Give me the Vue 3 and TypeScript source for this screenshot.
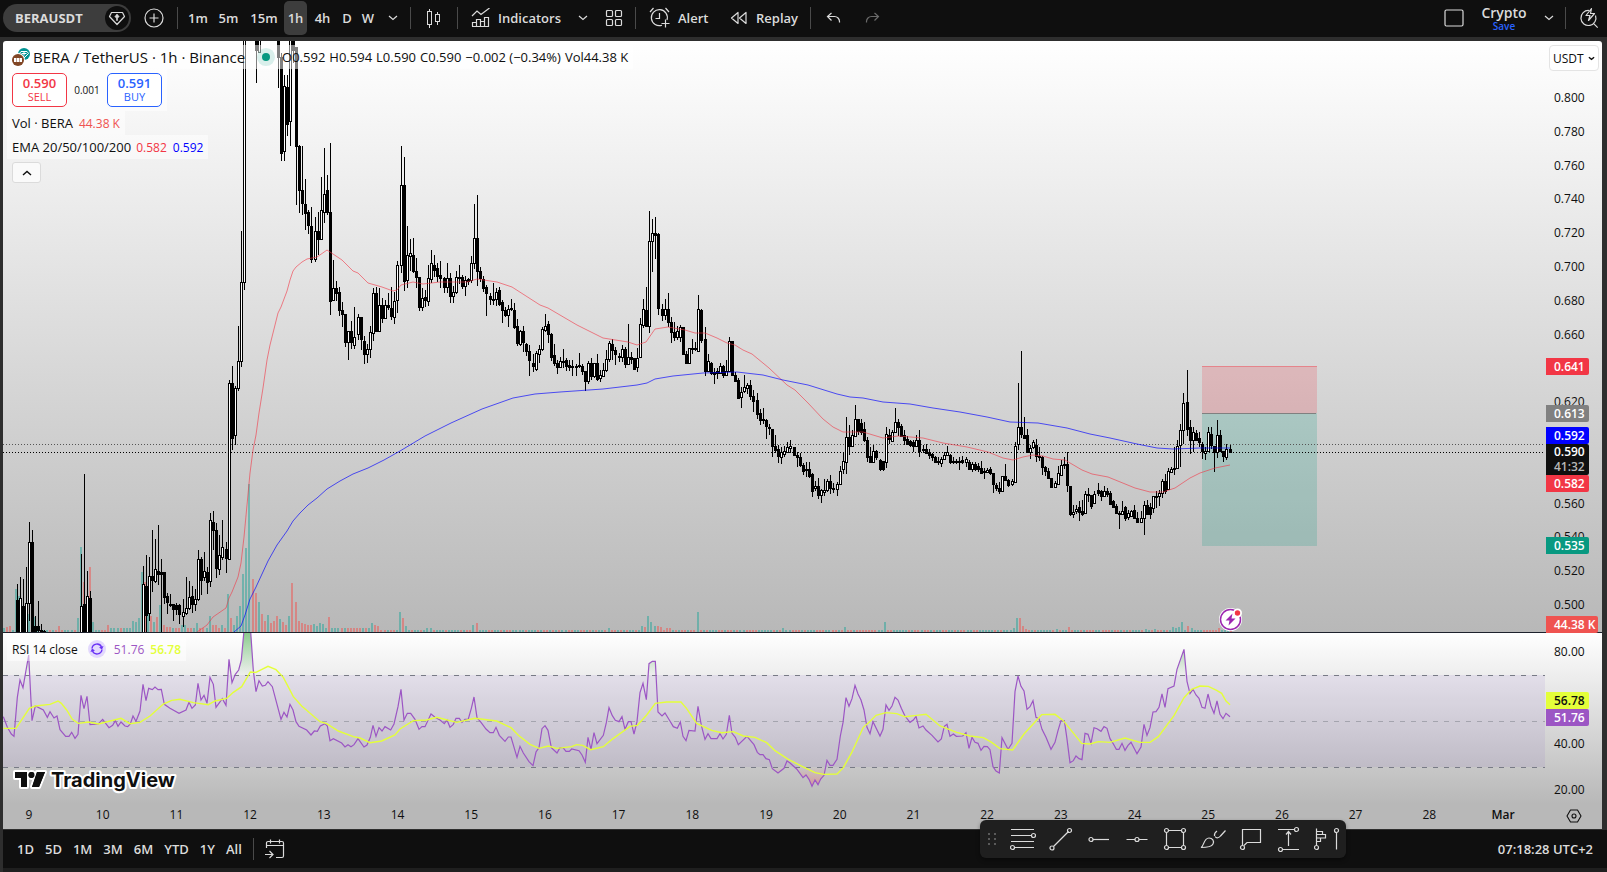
<script setup lang="ts">
import { ref } from 'vue'

/* ---------- toolbar data ---------- */
const intervals = [
  { label: '1m', width: 30 },
  { label: '5m', width: 31 },
  { label: '15m', width: 40 },
  { label: '1h', width: 23 },
  { label: '4h', width: 31 },
  { label: 'D', width: 18 },
  { label: 'W', width: 24 }
]
const activeInterval = ref('1h')
const ranges = ['1D', '5D', '1M', '3M', '6M', 'YTD', '1Y', 'All']
const currency = ref('USDT')

/* ---------- plot geometry ---------- */
const PLOT = { left: 3, width: 1542 }
const PRICE = { top: 41, height: 591 }
const RSI = { top: 633, height: 171 }
const BAR_STEP = 3.0686

const priceTop = (y: number) => ({ top: ((y - PRICE.top) / PRICE.height) * 100 + '%' })
const rsiTop = (y: number) => ({ top: ((y - RSI.top) / RSI.height) * 100 + '%' })

const priceTicks = [0.8, 0.78, 0.76, 0.74, 0.72, 0.7, 0.68, 0.66, 0.62, 0.56, 0.54, 0.52, 0.5].map(p => ({
  text: p.toFixed(3),
  y: 98 + (0.8 - p) * 1690
}))
const priceTags = [
  { text: '0.641', y: 367, kind: 'red' },
  { text: '0.613', y: 414, kind: 'grey' },
  { text: '0.592', y: 436, kind: 'blue' },
  { text: '0.582', y: 484, kind: 'red' },
  { text: '0.535', y: 546, kind: 'teal' },
  { text: '44.38 K', y: 625, kind: 'volume' }
]
const rsiTicks = [
  { text: '80.00', y: 652 },
  { text: '40.00', y: 744 },
  { text: '20.00', y: 790 }
]
const rsiTags = [
  { text: '56.78', y: 701, kind: 'yellow' },
  { text: '51.76', y: 718, kind: 'purple' }
]
const days = Array.from({ length: 21 }, (_, i) => ({
  text: i < 20 ? String(9 + i) : 'Mar',
  x: 29 + i * 73.7
}))
const dayLeft = (x: number) => ({ left: ((x - PLOT.left) / PLOT.width) * 100 + '%' })

/* ---------- candles: x of the first bar, then high, top, bottom, low, u/d ---------- */
const candleRows: [number, string][] = [
  [17, '584 600 635 635 d,577 598 635 635 u,579 606 635 635 d,567 603 635 635 u,522 542 603 620 u,530 542 635 635 d,616 626 635 635 d,601 626 630 635 d,624 630 635 635 d,630 631 635 635 d'],
  [81, '554 606 635 635 u,474 604 635 635 d,571 596 635 635 u,591 598 635 635 d'],
  [143, '566 584 635 635 u,555 586 615 635 d,557 576 613 620 u,530 576 580 591 d,539 569 581 582 u,525 571 574 584 d,559 572 574 635 d,572 572 597 603 d,593 596 602 613 d,594 604 605 606 d,604 604 609 620 d,603 605 609 614 d,604 605 614 623 d'],
  [183, '599 612 616 626 u,577 608 613 614 u,581 597 608 609 u,586 596 604 612 d,589 599 604 610 u,550 559 599 600 u,557 559 580 594 d,552 571 577 580 u,567 572 582 593 d,513 520 581 586 u,511 522 530 549 d,523 530 568 577 d,535 555 569 574 u,520 547 557 559 u'],
  [226, '542 549 558 572 d,380 383 559 559 u,366 383 438 449 d,386 388 435 444 u,326 361 388 390 u,231 282 361 366 u,20 20 282 289 u'],
  [256, '20 20 50 82 d,20 20 52 52 u'],
  [278, '20 20 57 87 d,53 57 153 160 d,75 86 151 160 u,75 87 124 135 d,20 20 121 145 u,20 20 50 62 d,47 47 146 204 d,145 146 190 212 d,146 190 203 214 d,179 204 213 229 d,210 212 225 233 d,207 226 259 262 d'],
  [315, '217 231 259 261 u,212 231 239 254 d,177 210 239 239 u,148 194 212 222 u,175 190 212 214 d,143 212 301 314 d,260 288 300 300 u,281 288 293 300 d,287 292 310 315 d,302 310 314 326 d,314 314 342 346 d,331 331 342 359 u,321 331 342 348 d,307 337 345 348 u'],
  [358, '314 317 334 339 u,317 317 339 349 d,336 341 354 363 d,344 349 354 362 u,326 332 349 357 u,288 293 333 340 u,287 293 331 331 d,288 305 331 331 u,298 305 318 322 d,300 305 318 318 u,293 305 307 309 d,287 308 316 319 d,292 301 317 323 u,261 265 300 312 u'],
  [401, '146 185 265 272 u,157 185 281 290 d,226 255 280 287 u,239 253 256 270 u,238 255 271 272 d,258 271 277 287 d,277 277 307 310 d,288 298 307 310 u,290 297 300 306 d,265 278 301 305 u,250 263 279 282 u,255 265 270 276 d,263 268 276 281 d,261 275 278 287 d'],
  [444, '277 278 287 292 d,263 278 287 292 u,273 278 296 302 d,286 292 296 302 u,271 277 292 293 u,265 277 278 283 d,275 277 286 288 d,276 280 286 295 u,278 279 281 284 d,256 263 280 282 u,204 238 263 268 u,195 238 271 285 d,267 271 278 281 d,276 279 288 291 d,285 287 293 315 d'],
  [490, '293 296 299 304 d,283 299 300 304 d,288 292 299 305 u,287 290 304 305 d,300 302 310 322 d,307 310 315 316 d,305 309 315 326 u,299 308 309 310 d,303 310 327 328 d,319 326 343 345 d,330 331 344 345 u,326 331 342 351 d,343 344 351 355 d,345 351 360 375 d'],
  [533, '354 363 366 371 d,351 353 369 370 u,345 349 354 362 u,327 329 349 350 u,314 326 330 331 u,321 324 334 342 d,333 334 357 360 d,344 355 363 365 d,360 363 367 373 d,357 361 367 367 u,349 361 362 367 u,358 360 366 370 d,360 365 367 370 d,360 366 367 375 d'],
  [576, '364 366 367 375 d,353 365 366 367 d,364 366 371 374 d,371 371 381 390 d,361 363 381 383 u,358 363 376 379 d,363 363 376 377 u,354 363 379 380 d,370 375 378 381 u,363 370 376 376 u,350 359 370 371 u,341 343 359 361 u,339 344 350 359 d,347 350 354 364 d'],
  [619, '353 356 357 361 d,345 349 357 361 u,347 349 364 367 d,324 357 364 364 u,352 357 359 363 d,358 358 369 369 d,348 358 367 371 u,318 324 357 357 u,299 309 325 327 u,287 310 326 326 d,211 241 326 332 u,219 233 241 271 u,217 233 235 258 d,233 234 308 314 d'],
  [662, '304 309 315 320 d,299 309 315 319 u,293 309 322 326 d,317 322 332 342 d,322 332 337 340 d,326 331 337 339 u,325 327 337 341 u,327 327 354 354 d,351 354 363 363 d,348 348 363 363 u,339 348 349 353 d,342 348 349 350 d,295 309 351 351 u,309 310 340 342 d'],
  [705, '327 339 371 375 d,354 361 371 371 u,362 363 373 374 d,368 372 374 383 d,368 371 373 378 d,363 366 373 373 u,365 366 375 377 d,360 371 375 375 u,337 341 371 371 u,341 341 375 375 d,372 375 381 381 d,378 380 398 398 d,387 392 397 407 u,375 387 391 392 u,383 385 388 393 u,380 385 396 399 d,390 396 401 411 d'],
  [757, '393 400 414 418 d,409 413 420 424 d,408 419 420 423 d,419 420 426 438 d,424 427 428 434 d,429 429 446 456 d,435 446 450 452 d,445 449 456 462 d,447 452 457 463 u,446 451 454 456 u,442 447 452 452 u,440 446 448 452 u'],
  [794, '447 447 455 455 d,452 455 457 466 d,453 457 465 466 d,463 465 471 474 d,462 469 470 476 d,462 469 476 477 d,473 474 491 496 d,481 486 488 490 u,478 486 495 498 d,489 490 495 502 u,479 490 492 495 u,479 481 490 491 u,475 481 488 493 d,483 488 489 492 d'],
  [837, '482 484 489 495 u,466 471 484 484 u,452 461 469 473 u,417 437 462 473 u,425 437 446 454 d,430 435 446 446 u,405 419 436 436 u,419 419 431 434 d,419 423 432 434 d,422 429 440 441 d,437 440 457 461 d,447 456 462 462 d,445 451 462 462 u,450 451 457 459 d'],
  [880, '459 460 469 470 d,461 461 469 470 d,427 434 462 467 u,429 435 439 443 d,430 432 441 441 u,408 422 432 432 u,419 422 427 435 d,424 426 436 436 d,430 435 440 444 d,436 439 444 444 d,440 441 445 446 d,440 442 446 451 d,435 440 446 446 u,430 440 451 456 d'],
  [923, '445 449 450 452 d,444 449 453 453 d,449 452 455 458 d,453 454 457 460 d,456 457 462 462 d,457 461 462 464 d,457 459 463 466 u,452 455 459 459 u,446 452 455 455 u,454 455 462 463 d,457 461 462 463 d,459 461 462 463 d,457 461 462 469 d,456 460 462 463 d'],
  [966, '457 459 462 466 u,460 462 469 469 d,462 464 469 471 u,462 464 469 470 d,463 466 469 471 d,461 468 473 473 d,468 471 472 478 d,468 470 472 472 u,467 469 473 474 d,473 473 484 492 d,483 485 488 490 d,482 488 491 493 d,476 476 491 491 u,464 476 480 480 d,479 480 485 486 d'],
  [1012, '479 481 484 485 u,442 446 482 482 u,383 427 444 449 u,351 427 434 437 d,417 435 438 438 d,429 435 452 452 d,445 448 452 458 u,440 442 447 448 u,439 445 456 461 d,447 456 457 460 d,456 457 467 474 d,466 467 471 475 d,468 471 478 478 d,478 478 487 487 d'],
  [1055, '481 483 487 487 u,466 473 484 484 u,460 465 475 475 u,457 464 465 468 d,452 464 485 491 d,486 486 514 515 d,505 512 514 517 u,505 509 511 513 u,501 507 512 520 d,500 511 514 515 d,491 494 513 513 u,488 494 495 501 d,495 495 506 508 d,491 494 503 503 u'],
  [1098, '483 490 493 495 d,490 491 496 500 d,486 491 496 496 u,488 491 494 496 d,491 493 504 504 d,500 501 507 507 d,504 506 513 513 d,511 513 514 528 d,501 511 514 514 u,506 507 518 520 d,510 513 517 519 u,510 511 516 516 u,505 510 518 518 d,512 518 522 522 d'],
  [1141, '511 518 522 522 u,501 505 518 534 u,500 505 514 514 d,503 507 514 518 d,496 496 508 512 u,491 496 497 507 u,490 493 496 505 u,479 481 493 497 u,474 481 491 493 d,468 471 489 489 u,467 469 472 472 u,447 468 469 474 d,440 446 468 468 u,424 430 445 466 u,393 403 430 443 u'],
  [1187, '370 402 429 435 d,420 427 440 453 d,427 432 440 451 u,430 433 440 440 d,432 438 442 446 d,442 444 451 458 d,447 451 453 459 u,427 432 451 451 u,427 434 445 448 d,446 446 452 471 d,420 435 452 457 u,430 435 451 451 d,451 451 456 461 d,444 449 457 459 u'],
  [1230, '445 449 452 452 d']
]

let candleInk = ''
let candleCore = ''
for (const [start, bars] of candleRows) {
  bars.split(',').forEach((bar, i) => {
    const [h, t, b, l, dir] = bar.split(' ')
    const x = start + i * 3
    const [high, top, bottom, low] = [+h, +t, +b, +l]
    const bodyHeight = Math.max(1, bottom - top + 1)
    candleInk += `M${x} ${high}h1V${low + 1}h-1zM${x - 1} ${top}h3v${bodyHeight}h-3z`
    if (dir === 'u' && bodyHeight > 2) candleCore += `M${x} ${top + 1}h1v${bodyHeight - 2}h-1z`
  })
}

/* ---------- volume: bar x → height, negative heights are falling bars ---------- */
const volumePeaks: Record<number, number> = {
  4: 4, 7: -5, 10: -6, 17: 43, 20: 36, 23: -16, 26: 20, 29: 18, 35: 15, 60: -6, 78: 14, 81: 85, 84: -50, 87: 30, 90: -65, 93: 10,
  109: -7, 133: 11, 136: 10, 139: 14, 143: 60, 146: -50, 149: 18, 152: -16, 155: 10, 158: -15, 161: 27, 164: -7, 167: -5, 170: -5, 183: 7,
  186: 7, 198: 9, 210: 16, 213: -7, 216: -7, 222: 7, 229: 38, 232: -14, 235: 7, 238: 16, 241: 26, 244: 58, 247: 84, 250: 148, 253: -53, 256: -39,
  259: 30, 262: -18, 265: -11, 268: 17, 271: -9, 275: -11, 278: -16, 281: 13, 284: -10, 287: -7, 290: 16, 293: -49, 296: -30, 299: -11,
  302: -9, 305: -8, 308: -7, 311: -7, 314: 8, 317: 6, 321: 9, 324: 8, 330: -15, 373: 9, 376: -7, 379: -6, 400: 20, 403: -14, 406: 6,
  427: 4, 430: 4, 474: 7, 477: -9, 609: 4, 643: 6, 646: -5, 649: 16, 652: 10, 655: 6, 658: -6, 661: -5, 667: -4, 670: -4, 698: 20,
  784: 4, 846: 5, 886: 10, 1015: 4, 1018: 14, 1021: -14, 1024: -6, 1027: -3, 1058: 3, 1070: -5, 1144: 3, 1156: 3, 1174: 5, 1177: 4,
  1180: 5, 1183: 10, 1187: -12, 1190: -6, 1193: 4, 1220: -4
}
const barIndex = (x: number) => Math.round((x - 4) / BAR_STEP)
const peaksByBar = new Map(Object.entries(volumePeaks).map(([x, h]) => [barIndex(+x), h]))
let volumeUp = ''
let volumeDown = ''
for (let i = 0; i <= 400; i++) {
  const x = Math.round(4 + i * BAR_STEP)
  const noise = Math.sin(i * 12.9898) * 43758.5453
  const r = noise - Math.floor(noise)
  const base = x > 110 && x < 380 ? 4 : 2
  const h = peaksByBar.get(i) ?? (r > 0.5 ? base : -base)
  const rect = `M${x - 1} ${632 - Math.abs(h)}h2V632h-2z`
  if (h > 0) volumeUp += rect
  else volumeDown += rect
}

/* ---------- moving averages ---------- */
const emaFast =
  '197,632 207,625 213,617 226,608 229,598 232,592 238,577 241,563 244,537 247,505 250,473 253,450 256,435 259,413 263,388 267,360 270,345 275,325 278,313 281,307 287,291 290,280 293,271 296,267 302,262 307,259 317,257 327,250 333,254 342,260 353,271 358,273 368,283 382,287 393,291 397,290 401,285 413,282 423,284 440,282 467,282 477,279 497,282 512,287 540,305 548,308 577,325 603,338 628,342 637,345 646,342 655,329 668,327 685,330 695,333 705,333 717,338 727,343 735,345 743,350 752,354 769,368 787,385 795,390 808,403 823,419 833,427 843,432 863,432 883,438 898,436 923,438 943,443 967,447 988,452 1003,458 1013,460 1023,457 1033,455 1043,456 1053,459 1065,460 1082,470 1092,474 1108,477 1135,488 1150,492 1163,492 1175,488 1190,478 1200,473 1215,468 1230,465'
const emaSlow =
  '234,632 241,626 245,615 250,599 256,587 268,561 277,545 287,531 293,521 300,513 308,505 317,498 327,489 340,481 353,474 368,468 384,460 400,451 425,436 451,423 482,409 513,398 535,394 560,392 603,389 637,385 647,383 655,379 673,376 703,373 737,372 763,375 783,380 808,385 837,394 850,397 863,398 883,402 910,404 933,408 960,412 987,417 1010,422 1038,423 1067,428 1090,434 1110,438 1137,444 1157,448 1173,449 1200,448 1230,448'

/* ---------- RSI samples, three units per pixel, each run with its own origin ---------- */
type Run = [number, string]
const rsiRuns: Run[] = [
  [0, '10,290 22,322 34,342 42,349 52,232 60,180 69,203 86,105 96,302 106,258 130,270 142,292 150,275 162,294 171,288 180,329 197,349 207,349 215,337 225,355 234,343 243,226 252,266 261,229 270,314 295,312 308,298 327,323 338,316 346,302 354,319 363,306 375,318 383,320 391,312 399,288 408,304 420,273 429,193 438,242 446,205 457,209 465,201 474,209 484,208 493,253 510,265 537,280 558,270 567,247 576,265 586,255 594,190 603,240 612,226 621,250 630,172 640,193 648,262 667,236 678,256 687,118 696,188 706,163 716,150 724,120 733,20 751,20 760,152 768,215 777,182 787,198 796,196 804,185 817,200 843,298 852,277 861,291 870,253 879,270 888,305 897,319 920,330 933,345 943,333 952,334 961,318 975,311 982,318 990,362 1000,356 1025,369 1035,381 1044,374 1053,380 1062,374 1074,356 1092,381 1101,375 1111,352 1119,316 1128,349 1137,323 1146,333 1155,320 1172,330 1182,312 1194,260 1203,208 1212,300 1222,280 1232,280 1245,298'],
  [400, '57,328 66,320 75,320 93,282 105,292 120,300 133,311 141,300 150,322 160,313 168,295 178,295 186,307 195,298 205,297 214,265 222,231 231,293 243,307 258,327 270,338 280,338 288,322 298,346 315,364 325,351 333,351 351,412 360,379 370,399 387,425 399,437 408,396 417,383 426,326 435,317 444,331 454,383 471,399 480,383 489,383 498,394 508,394 515,387 537,392 546,405 556,427 564,352 573,388 582,338 591,371 610,346 619,308 627,263 637,287 646,301 657,305 666,290 675,328 685,305 693,305 702,342 711,305 720,218 729,190 739,239 747,131 757,124 766,124 774,276 786,288 795,279 808,300 820,320 832,325 841,306 849,349 858,362 867,331 885,333 894,259 904,316 915,358 924,341 933,356 951,356 960,341 969,357 979,343 988,286 996,340 1006,352 1015,374 1041,349 1062,374 1072,397 1080,404 1089,404 1098,416 1108,419 1117,446 1134,459 1152,445 1161,423 1170,429 1190,447 1209,473 1218,465 1227,478 1236,499 1245,480'],
  [800, '54,494 62,477 72,466 81,421 90,436 99,436 111,418 121,348 129,308 138,233 147,259 156,236 165,196 174,222 183,240 192,270 201,322 210,341 219,305 240,348 249,328 258,255 267,271 276,258 285,232 294,240 304,265 315,288 330,307 340,300 348,289 357,324 369,318 378,330 396,346 414,366 424,357 433,319 441,313 450,349 460,342 469,349 488,348 498,338 507,385 516,352 525,367 534,370 543,391 552,379 562,380 570,389 579,440 588,453 598,459 606,353 624,388 636,370 645,215 654,168 663,199 672,213 681,268 690,260 699,242 708,292 717,296 726,328 738,352 753,388 765,367 774,332 783,302 793,302 800,350 810,428 820,422 828,408 837,416 846,419 855,340 864,343 873,370 882,323 891,326 903,334 912,320 921,325 930,356 939,370 949,388 957,388 966,370 975,391 984,376 993,367 1011,401 1023,381 1032,313 1041,346 1050,323 1059,276 1068,275 1077,262 1086,222 1095,262 1104,206 1122,198 1131,148 1152,88 1161,184 1170,221 1179,208 1188,225 1197,235 1206,262 1215,265 1224,222 1233,258 1242,280 1251,243 1260,283 1269,296 1278,280 1290,290']
]
const signalRuns: Run[] = [
  [0, '10,325 48,325 88,265 106,258 150,253 174,243 184,250 200,270 217,298 235,310 265,306 295,312 363,295 390,311 420,307 450,288 490,252 515,241 540,238 580,248 625,254 645,243 680,235 700,217 725,200 751,156 768,157 804,139 828,149 850,172 880,230 905,258 960,305 980,311 1015,333 1060,350 1080,354 1110,368 1145,363 1185,345'],
  [400, '0,327 40,302 80,300 110,292 130,297 170,307 225,295 290,303 333,323 355,346 390,373 417,385 445,378 470,385 515,380 530,374 548,376 572,389 610,380 635,359 690,319 712,316 740,285 766,250 800,246 843,246 860,266 890,310 935,331 965,338 1000,335 1030,348 1065,352 1100,368 1125,392 1165,418'],
  [800, '0,436 45,458 72,463 111,462 130,443 155,398 190,322 205,309 228,286 258,278 290,281 315,290 350,286 378,283 420,318 470,337 510,348 550,353 575,367 600,386 638,390 672,342 725,284 765,283 790,302 845,370 870,372 895,365 930,367 975,354 1020,367 1050,367 1075,350 1122,287 1152,233 1175,208 1200,198 1225,199 1250,211 1265,220 1278,243 1290,254']
]
const toPoints = (runs: Run[]) =>
  runs
    .flatMap(([origin, text]) =>
      text.split(' ').map(pair => {
        const [x, y] = pair.split(',').map(Number)
        return `${(origin + x / 3).toFixed(2)},${(620 + y / 3).toFixed(2)}`
      })
    )
    .join(' ')
const rsiPoints = toPoints(rsiRuns)
const signalPoints = toPoints(signalRuns)
const overbought = `3,675 ${rsiPoints} 1230,675`
const oversold = `3,767 ${rsiPoints} 1230,767`
</script>

<template>
  <div class="app">
    <header class="topbar">
      <button class="symbol" type="button">
        <span>BERAUSDT</span>
        <svg class="symbol-badge" viewBox="0 0 24 24" width="24" height="24">
          <circle cx="12" cy="12" r="12" fill="#0f0f0f" />
          <path d="M6.500 6.500h11l2 4-7.500 8-7.500-8z" fill="none" stroke="#dbdbdb" stroke-width="1.200" stroke-linejoin="round" />
          <path d="M12 8l2.200 2.700-1.700 1.300v2.500h-1v-2.500l-1.700-1.300z" fill="#dbdbdb" stroke="#dbdbdb" stroke-width=".6" />
        </svg>
      </button>
      <button class="icon-btn add" type="button" aria-label="Compare symbol">
        <svg viewBox="0 0 20 20" width="20" height="20" class="line">
          <circle cx="10" cy="10" r="9" /><path d="M10 5.500v9M5.500 10h9" />
        </svg>
      </button>
      <i class="divider"></i>
      <nav class="intervals" aria-label="Interval">
        <button
          v-for="item in intervals"
          :key="item.label"
          type="button"
          :class="{ active: item.label === activeInterval }"
          :style="{ width: item.width + 'px' }"
          @click="activeInterval = item.label"
        >{{ item.label }}</button>
      </nav>
      <button class="icon-btn w30 lean" type="button" aria-label="More intervals">
        <svg viewBox="0 0 10 6" width="10" height="6" class="line"><path d="M1 1l4 3.500 4-3.500" /></svg>
      </button>
      <i class="divider"></i>
      <button class="icon-btn w46" type="button" aria-label="Chart style">
        <svg viewBox="0 0 16 20" width="16" height="20" class="line crisp">
          <path d="M3.500 0.500v3M3.500 17v3M1.500 3.500h4v13h-4zM11.500 4v3M11.500 14v3M9.500 6.500h4v7h-4z" />
        </svg>
      </button>
      <i class="divider"></i>
      <button class="text-btn indicators" type="button">
        <svg viewBox="0 0 20 20" width="20" height="20" class="line">
          <path d="M1 8l5-5 4 3.500 8.500-6.500M1.500 18.500v-4h4v4M5.500 18.500v-7h4v7M9.500 18.500v-5h4v5M13.500 18.500v-9h4v9zM1 18.500h17" />
        </svg>
        <span>Indicators</span>
      </button>
      <button class="icon-btn w32" type="button" aria-label="Favorite indicators">
        <svg viewBox="0 0 10 6" width="10" height="6" class="line"><path d="M1 1l4 3.500 4-3.500" /></svg>
      </button>
      <button class="icon-btn w30" type="button" aria-label="Templates">
        <svg viewBox="0 0 18 18" width="18" height="18" class="line">
          <rect x="1.500" y="1.500" width="6" height="6" rx="1" /><rect x="10.500" y="1.500" width="6" height="6" rx="1" />
          <rect x="1.500" y="10.500" width="6" height="6" rx="1" /><rect x="10.500" y="10.500" width="6" height="6" rx="1" />
        </svg>
      </button>
      <i class="divider after-grid"></i>
      <button class="text-btn alert" type="button">
        <svg viewBox="0 0 22 22" width="22" height="22" class="line">
          <path d="M13 18.200A8 8 0 1 1 18 13M10.500 6v5.500h-4M1 5l3.500-4M20 5l-3.500-4M16.500 12.500v8M12.500 16.500h8" />
        </svg>
        <span>Alert</span>
      </button>
      <button class="text-btn replay" type="button">
        <svg viewBox="0 0 18 14" width="18" height="14" class="line">
          <path d="M8 1.500v11L1.500 7zM16 1.500v11L9.500 7z" stroke-linejoin="round" />
        </svg>
        <span>Replay</span>
      </button>
      <i class="divider"></i>
      <button class="icon-btn w46" type="button" aria-label="Undo">
        <svg viewBox="0 0 16 12" width="16" height="12" class="line"><path d="M5.500 1L1.500 4.500l4 4M1.500 4.500h7a5 5 0 0 1 5 5v1" /></svg>
      </button>
      <button class="icon-btn w30 dim" type="button" aria-label="Redo">
        <svg viewBox="0 0 16 12" width="16" height="12" class="line"><path d="M10.500 1l4 3.500-4 4M14.500 4.500h-7a5 5 0 0 0-5 5v1" /></svg>
      </button>
      <div class="spacer"></div>
      <button class="icon-btn w30" type="button" aria-label="Layout">
        <svg viewBox="0 0 20 18" width="20" height="18" class="line"><rect x="1" y="1" width="18" height="16" rx="1.500" /></svg>
      </button>
      <button class="layout-name" type="button"><span>Crypto</span><small>Save</small></button>
      <button class="icon-btn w28 lean" type="button" aria-label="Layouts">
        <svg viewBox="0 0 10 6" width="10" height="6" class="line"><path d="M1 1l4 3.500 4-3.500" /></svg>
      </button>
      <i class="divider"></i>
      <button class="icon-btn search" type="button" aria-label="Quick search">
        <svg viewBox="0 0 22 22" width="22" height="22" class="line">
          <path d="M11 3.500a7.500 7.500 0 1 0 6.500 5M15.200 16.200l4.500 4.500" />
          <path d="M13.500 1.500l-5.500 7h4l-1.500 5 6-7h-4z" stroke-linejoin="round" />
        </svg>
      </button>
    </header>

    <main class="chart">
      <section class="pane price-pane">
        <div class="plot">
          <svg class="canvas" viewBox="3 41 1542 591" preserveAspectRatio="none">
            <path :d="volumeUp" fill="#26a69a" fill-opacity=".5" class="crisp" />
            <path :d="volumeDown" fill="#ef5350" fill-opacity=".5" class="crisp" />
            <rect x="1202" y="366" width="115" height="47" fill="#f23645" fill-opacity=".2" />
            <rect x="1202" y="413" width="115" height="133" fill="#089981" fill-opacity=".2" />
            <path d="M1202 366.500h115" stroke="#f23645" stroke-opacity=".4" />
            <path d="M1202 413.500h114" stroke="#808080" />
            <path d="M3 444.500H1545" stroke="#555" stroke-dasharray="1 2" class="crisp" />
            <path d="M3 452.500H1545" stroke="#000" stroke-dasharray="1 2" class="crisp" />
            <path :d="candleInk" fill="#000" class="crisp" />
            <path :d="candleCore" fill="#fff" class="crisp" />
            <polyline :points="emaFast" fill="none" stroke="#f23645" stroke-opacity=".6" />
            <polyline :points="emaSlow" fill="none" stroke="#0000ff" stroke-opacity=".65" />
            <g transform="translate(1230.500 619.500)">
              <circle r="11.500" fill="#fff" /><circle r="10" fill="#fff" stroke="#9c27b0" stroke-width="1.500" />
              <path d="M2 -6L-5 1h4L-2 6 5 -1H1z" fill="#9c27b0" />
              <circle cx="7" cy="-6.500" r="4.500" fill="#fff" /><circle cx="7" cy="-6.500" r="2.700" fill="#f23645" />
            </g>
          </svg>

          <div class="legend">
            <div class="row title-row">
              <svg viewBox="0 0 20 20" width="20" height="20">
                <circle cx="12" cy="7" r="6" fill="#009393" />
                <path d="M9 4.500h6l1.500 2-4.500 4.500-4.500-4.500zM12 4.500v4M9.500 6.500h5" fill="none" stroke="#fff" stroke-width="1" />
                <circle cx="6" cy="13" r="7" fill="#fff" /><circle cx="6" cy="13" r="6" fill="#814625" />
                <path d="M2 11h2.500v4H2zM5 11h2v4H5zM7.500 11H10v4H7.500z" fill="#fff" />
              </svg>
              <h1>BERA / TetherUS · 1h · Binance</h1>
              <span class="status"></span>
              <span class="ohlc">
                <span>O0.592</span><span>H0.594</span><span>L0.590</span><span>C0.590</span><span>−0.002 (−0.34%)</span><span>Vol44.38 K</span>
              </span>
            </div>
            <div class="row trade-row">
              <button type="button" class="trade sell"><b>0.590</b><span>SELL</span></button>
              <span class="spread">0.001</span>
              <button type="button" class="trade buy"><b>0.591</b><span>BUY</span></button>
            </div>
            <div class="row study"><span class="study-name">Vol · BERA</span><span class="vol-value">44.38 K</span></div>
            <div class="row study"><span class="study-name">EMA 20/50/100/200</span><span class="fast-value">0.582</span><span class="slow-value">0.592</span></div>
            <button class="collapse" type="button" aria-label="Collapse legend">
              <svg viewBox="0 0 10 6" width="10" height="6"><path d="M1 5l4-3.500 4 3.500" fill="none" stroke="#0f0f0f" stroke-width="1.400" /></svg>
            </button>
          </div>
        </div>
        <div class="scale">
          <label class="currency">
            <select v-model="currency" aria-label="Price currency"><option>USDT</option></select>
            <svg viewBox="0 0 8 5" width="7" height="5"><path d="M1 1l3 2.500 3-2.500" fill="none" stroke="#0f0f0f" stroke-width="1.600" /></svg>
          </label>
          <span v-for="tick in priceTicks" :key="tick.text" class="tick" :style="priceTop(tick.y)">{{ tick.text }}</span>
          <span v-for="tag in priceTags" :key="tag.text" class="tag" :class="tag.kind" :style="priceTop(tag.y)">{{ tag.text }}</span>
          <span class="tag last" :style="priceTop(460)"><b>0.590</b><span>41:32</span></span>
        </div>
      </section>

      <section class="pane rsi-pane">
        <div class="plot">
          <svg class="canvas" viewBox="3 633 1542 171" preserveAspectRatio="none">
            <defs>
              <linearGradient id="hot" gradientUnits="userSpaceOnUse" x1="0" y1="633" x2="0" y2="675">
                <stop offset="0" stop-color="#4caf50" stop-opacity=".65" /><stop offset="1" stop-color="#4caf50" stop-opacity="0" />
              </linearGradient>
              <linearGradient id="cold" gradientUnits="userSpaceOnUse" x1="0" y1="767" x2="0" y2="800">
                <stop offset="0" stop-color="#ff5252" stop-opacity="0" /><stop offset="1" stop-color="#ff5252" stop-opacity=".6" />
              </linearGradient>
              <clipPath id="above"><rect x="3" y="633" width="1542" height="42" /></clipPath>
              <clipPath id="below"><rect x="3" y="767" width="1542" height="40" /></clipPath>
            </defs>
            <rect x="3" y="675" width="1542" height="92" fill="#7e57c2" fill-opacity=".1" />
            <polygon :points="overbought" fill="url(#hot)" clip-path="url(#above)" />
            <polygon :points="oversold" fill="url(#cold)" clip-path="url(#below)" />
            <path d="M3 675.500H1545M3 767.500H1545" stroke="#787b86" stroke-dasharray="5 6" class="crisp" />
            <path d="M3 721.500H1545" stroke="#787b86" stroke-opacity=".5" stroke-dasharray="5 6" class="crisp" />
            <polyline :points="rsiPoints" fill="none" stroke="#9c56c4" stroke-width="1.200" />
            <polyline :points="signalPoints" fill="none" stroke="#e4ff3a" stroke-width="1.400" />
          </svg>
          <div class="legend rsi-legend">
            <div class="row study">
              <span>RSI 14 close</span>
              <svg viewBox="0 0 18 18" width="18" height="18">
                <circle cx="9" cy="9" r="9" fill="#e3d9fd" />
                <path d="M4 8.500a5 5 0 0 1 9.500-1.500M14 9.500a5 5 0 0 1-9.500 1.500" fill="none" stroke="#6a33f5" stroke-width="1.400" />
                <path d="M15.500 6l-1.500 3.500-3-2zM2.500 12l1.500-3.500 3 2z" fill="#6a33f5" />
              </svg>
              <span class="rsi-value">51.76</span><span class="signal-value">56.78</span>
            </div>
          </div>
          <svg class="brand" viewBox="0 0 168 30" width="168" height="30" role="img" aria-label="TradingView">
            <g stroke="#fff" stroke-width="4" stroke-linejoin="round" fill="#0f0f0f" paint-order="stroke">
              <path d="M5 6h12v15h-6v-9H5z" /><circle cx="21.500" cy="9" r="3" /><path d="M27 6h8l-6 15h-7z" />
              <text x="41" y="21">TradingView</text>
            </g>
            <g fill="#0f0f0f"><path d="M5 6h12v15h-6v-9H5z" /><circle cx="21.500" cy="9" r="3" /><path d="M27 6h8l-6 15h-7z" /></g>
          </svg>
        </div>
        <div class="scale">
          <span v-for="tick in rsiTicks" :key="tick.text" class="tick" :style="rsiTop(tick.y)">{{ tick.text }}</span>
          <span v-for="tag in rsiTags" :key="tag.text" class="tag" :class="tag.kind" :style="rsiTop(tag.y)">{{ tag.text }}</span>
        </div>
      </section>

      <footer class="time-axis">
        <div class="days">
          <span v-for="day in days" :key="day.text" :class="{ month: day.text === 'Mar' }" :style="dayLeft(day.x)">{{ day.text }}</span>
        </div>
        <button type="button" class="axis-settings" aria-label="Scale settings">
          <svg viewBox="0 0 16 14" width="16" height="14" fill="none" stroke="#0f0f0f" stroke-width="1.100">
            <path d="M4.500 1h7L15 7l-3.500 6h-7L1 7z" stroke-linejoin="round" /><circle cx="8" cy="7" r="2" />
          </svg>
        </button>
      </footer>
    </main>

    <footer class="bottombar">
      <button v-for="range in ranges" :key="range" type="button">{{ range }}</button>
      <i class="divider"></i>
      <button type="button" aria-label="Go to date" class="goto">
        <svg viewBox="0 0 20 20" width="20" height="20" class="line">
          <path d="M1.500 9V4a1.500 1.500 0 0 1 1.500-1.500h14A1.500 1.500 0 0 1 18.500 4v13a1.500 1.500 0 0 1-1.500 1.500h-6M1.500 6.500h17M5.500 0.500v4M14.500 0.500v4M0 15.500h7.500M4.500 12l3.500 3.500-3.500 3.500" />
        </svg>
      </button>
      <div class="spacer"></div>
      <button type="button" class="clock">07:18:28 UTC+2</button>
    </footer>

    <div class="drawbar" role="toolbar" aria-label="Drawing tools">
      <svg class="grip" viewBox="0 0 24 38" width="24" height="38" fill="#5a5a5a">
        <path d="M8 13h2v2H8zM14 13h2v2h-2zM8 18h2v2H8zM14 18h2v2h-2zM8 23h2v2H8zM14 23h2v2h-2z" />
      </svg>
      <button type="button" aria-label="Fib retracement">
        <svg viewBox="0 0 26 24" width="26" height="24" class="line"><path d="M1 2.500h23M1 8.500h20.500M1 14.500h23M4 20.500h20" /><circle cx="23.500" cy="8.500" r="2" /><circle cx="2.500" cy="20.500" r="2" /></svg>
      </button>
      <button type="button" aria-label="Trend line">
        <svg viewBox="0 0 24 24" width="24" height="24" class="line"><path d="M4.500 19.500l15-15" /><circle cx="3" cy="21" r="2" /><circle cx="20.500" cy="3.500" r="2" /></svg>
      </button>
      <button type="button" aria-label="Horizontal ray">
        <svg viewBox="0 0 24 24" width="24" height="24" class="line"><path d="M6 12.500h16" /><circle cx="4" cy="12.500" r="2" /></svg>
      </button>
      <button type="button" aria-label="Horizontal line">
        <svg viewBox="0 0 24 24" width="24" height="24" class="line"><path d="M1.500 12.500h8.500M14 12.500h8.500" /><circle cx="12" cy="12.500" r="2" /></svg>
      </button>
      <button type="button" aria-label="Rectangle">
        <svg viewBox="0 0 24 24" width="24" height="24" class="line"><path d="M5.500 3.500h13M5.500 20.500h13M3.500 5.500v13M20.500 5.500v13" /><circle cx="3.500" cy="3.500" r="2" /><circle cx="20.500" cy="3.500" r="2" /><circle cx="3.500" cy="20.500" r="2" /><circle cx="20.500" cy="20.500" r="2" /></svg>
      </button>
      <button type="button" aria-label="Brush">
        <svg viewBox="0 0 26 24" width="26" height="24" class="line"><path d="M1 20.500c3-1 2.500-9.500 8-9.500 3.500 0 5.500 3 4 6-1.500 3-6 3.500-12 3.500zM14.500 9c-.500-3 1-4 2.500-5M15 9.500c1.500 2 4 1.500 5.500-.500l5-5.500" /></svg>
      </button>
      <button type="button" aria-label="Callout">
        <svg viewBox="0 0 24 24" width="24" height="24" class="line"><path d="M3.500 18V2.500h18v13H8L5 18.500" /><circle cx="3.500" cy="20.500" r="2" /></svg>
      </button>
      <button type="button" aria-label="Price range">
        <svg viewBox="0 0 24 26" width="24" height="26" class="line"><path d="M1 3.500h16.500M5.500 23.500h16.500M11.500 20V6M9 8.500L11.500 5.500l2.500 3" /><circle cx="19.500" cy="3.500" r="2" /><circle cx="3.500" cy="23.500" r="2" /></svg>
      </button>
      <button type="button" aria-label="Volume profile">
        <svg viewBox="0 0 26 24" width="26" height="24" class="line"><path d="M2.500 1.500v17M2.500 4.500h6v3h-6M2.500 7.500h9v3.500h-9M2.500 11h4v3.500h-4M22.500 5.500v17" /><circle cx="2.500" cy="20.500" r="2" /><circle cx="22.500" cy="3.500" r="2" /></svg>
      </button>
    </div>
  </div>
</template>

<style>
body {
  margin: 0;
  background: #2e2e2e;
}
</style>

<style scoped>
* {
  box-sizing: border-box;
}
.app {
  position: relative;
  display: flex;
  flex-direction: column;
  min-height: 100vh;
  font-family: "Open Sans", "Noto Sans", sans-serif;
  font-size: 12px;
  color: #0f0f0f;
  background: #2e2e2e;
}
button {
  margin: 0;
  padding: 0;
  border: 0;
  background: none;
  color: inherit;
  font: inherit;
  cursor: pointer;
}
svg {
  display: block;
  flex: none;
}
.line {
  fill: none;
  stroke: #dbdbdb;
  stroke-width: 1.2;
}
.crisp {
  shape-rendering: crispEdges;
}
.spacer {
  flex: 1;
}
.divider {
  flex: none;
  width: 1px;
  height: 22px;
  background: #4a4a4a;
}

/* top bar */
.topbar {
  display: flex;
  align-items: center;
  height: 37px;
  padding: 0 0 1px 3px;
  background: #0f0f0f;
  color: #dbdbdb;
  font-size: 13px;
  font-weight: 600;
}
.symbol {
  display: flex;
  align-items: center;
  justify-content: space-between;
  width: 128px;
  height: 28px;
  padding: 0 2px 0 12px;
  border-radius: 14px;
  background: #3d3d3d;
  font-size: 13px;
  font-weight: 700;
}
.icon-btn {
  display: flex;
  align-items: center;
  justify-content: center;
  height: 36px;
}
.add {
  width: 46px;
}
.w28 {
  width: 28px;
}
.w30 {
  width: 30px;
}
.w32 {
  width: 32px;
}
.w46 {
  width: 46px;
}
.lean {
  padding-right: 4px;
}
.search {
  width: 41px;
  padding-left: 4px;
}
.dim {
  opacity: 0.45;
}
.intervals {
  display: flex;
  padding-left: 5px;
}
.intervals button {
  height: 34px;
  border-radius: 5px;
}
.intervals .active {
  background: #3d3d3d;
}
.text-btn {
  display: flex;
  align-items: center;
  gap: 7px;
  height: 36px;
}
.indicators {
  width: 109px;
  padding-left: 13px;
}
.after-grid {
  margin-left: 6px;
}
.alert {
  width: 81px;
  padding-left: 13px;
}
.replay {
  gap: 8px;
  width: 93px;
  padding-left: 13px;
}
.layout-name {
  display: flex;
  flex-direction: column;
  align-items: center;
  width: 66px;
  margin-left: 2px;
  font-size: 14px;
  line-height: 16px;
}
.layout-name small {
  color: #2962ff;
  font-size: 10px;
  line-height: 10px;
}

/* chart */
.chart {
  display: flex;
  flex: 1;
  flex-direction: column;
  margin: 4px 5px 0 3px;
  border-radius: 3px 3px 0 0;
  overflow: hidden;
}
.pane {
  display: grid;
  grid-template-columns: 1fr 57px;
  background: linear-gradient(#fff, #b8b8b8);
}
.price-pane {
  flex: 591 1 0;
}
.rsi-pane {
  flex: none;
  height: 172px;
  border-top: 1px solid #1e222d;
}
.plot,
.scale {
  position: relative;
  min-width: 0;
}
.canvas {
  position: absolute;
  inset: 0;
  width: 100%;
  height: 100%;
}
.legend {
  position: absolute;
  top: 4px;
  left: 4px;
  display: flex;
  flex-direction: column;
  align-items: flex-start;
  font-size: 12px;
}
.row {
  display: flex;
  align-items: center;
  padding: 0 5px;
  background: rgba(255, 255, 255, 0.5);
}
.title-row {
  height: 24px;
}
.title-row h1 {
  margin: 0 0 0 1px;
  font-size: 15px;
  font-weight: 400;
  white-space: nowrap;
}
.status {
  width: 8px;
  height: 8px;
  margin: 0 12px 0 17px;
  border-radius: 50%;
  background: #089981;
  box-shadow: 0 0 0 5px rgba(8, 153, 129, 0.15);
}
.ohlc {
  display: flex;
  gap: 4px;
  font-size: 13px;
  white-space: nowrap;
}
.trade-row {
  height: 42px;
}
.trade {
  width: 55px;
  height: 34px;
  border: 1px solid;
  border-radius: 5px;
  background: #fff;
  font-size: 11px;
  line-height: 14px;
}
.trade b,
.trade span {
  display: block;
}
.trade b {
  font-size: 13px;
  font-weight: 600;
}
.sell {
  color: #f23645;
}
.buy {
  color: #2962ff;
}
.spread {
  width: 40px;
  font-size: 10px;
  text-align: center;
}
.study {
  height: 24px;
  white-space: nowrap;
}
.study-name {
  font-size: 13px;
}
.vol-value {
  margin-left: 6px;
  color: #ef5350;
}
.fast-value {
  margin-left: 5px;
  color: #f23645;
}
.slow-value {
  margin-left: 6px;
  color: #0000ff;
}
.collapse {
  display: flex;
  align-items: center;
  justify-content: center;
  width: 29px;
  height: 21px;
  margin: 3px 0 0 5px;
  border: 1px solid #dbdbdb;
  border-radius: 3px;
  background: #fafafa;
}
.rsi-legend svg {
  margin: 0 8px 0 10px;
}
.rsi-value {
  color: #9c56c4;
}
.signal-value {
  margin-left: 6px;
  color: #e4ff3a;
  font-weight: 600;
}
.brand {
  position: absolute;
  bottom: 8px;
  left: 7px;
}
.brand text {
  font-family: Inter, "Liberation Sans", sans-serif;
  font-size: 20px;
  font-weight: 700;
}

/* scales */
.tick,
.tag {
  position: absolute;
  left: 1px;
  height: 17px;
  margin-top: -9px;
  padding-left: 8px;
  line-height: 17px;
  white-space: nowrap;
}
.tag {
  width: 43px;
  border-radius: 0 2px 2px 0;
  color: #fff;
  font-weight: 600;
}
.red {
  background: #f23645;
}
.grey {
  background: #808080;
}
.blue {
  background: #0000ff;
}
.teal {
  background: #089981;
}
.volume {
  width: 52px;
  background: #ef5350;
}
.yellow {
  background: #e4ff3a;
  color: #0f0f0f;
}
.purple {
  background: #9c56c4;
}
.last {
  height: 31px;
  margin-top: -16px;
  background: #0f0f0f;
  line-height: 15px;
}
.last b,
.last span {
  display: block;
  font-weight: 600;
}
.last span {
  color: #b8b8b8;
}
.currency {
  position: absolute;
  top: 4px;
  right: 3px;
  display: flex;
  align-items: center;
  width: 50px;
  height: 26px;
  border: 1px solid #e4e4e4;
  border-radius: 4px;
  background: #fff;
}
.currency select {
  width: 38px;
  padding: 0 0 0 3px;
  border: 0;
  background: none;
  color: inherit;
  font: inherit;
  appearance: none;
}
.time-axis {
  display: grid;
  grid-template-columns: 1fr 57px;
  height: 25px;
  background: #b8b8b8;
}
.days {
  position: relative;
}
.days span {
  position: absolute;
  top: 2px;
  line-height: 17px;
  transform: translateX(-50%);
}
.days .month {
  font-weight: 600;
}
.axis-settings {
  display: flex;
  justify-content: center;
  padding-top: 5px;
}

/* bottom bar */
.bottombar {
  display: flex;
  align-items: center;
  gap: 11px;
  height: 43px;
  margin-left: 3px;
  padding: 0 14px 1px 14px;
  border-top: 1px solid #2e2e2e;
  border-bottom: 4px solid #1f1f1f;
  background: #0f0f0f;
  color: #dbdbdb;
  font-size: 13px;
  font-weight: 600;
}

/* floating drawing toolbar */
.drawbar {
  position: absolute;
  bottom: 14px;
  left: 61%;
  display: flex;
  height: 38px;
  border-radius: 6px;
  background: #1f1f1f;
  box-shadow: 0 2px 4px rgba(0, 0, 0, 0.4);
}
.drawbar button {
  display: flex;
  align-items: center;
  justify-content: center;
  width: 38px;
}
</style>
